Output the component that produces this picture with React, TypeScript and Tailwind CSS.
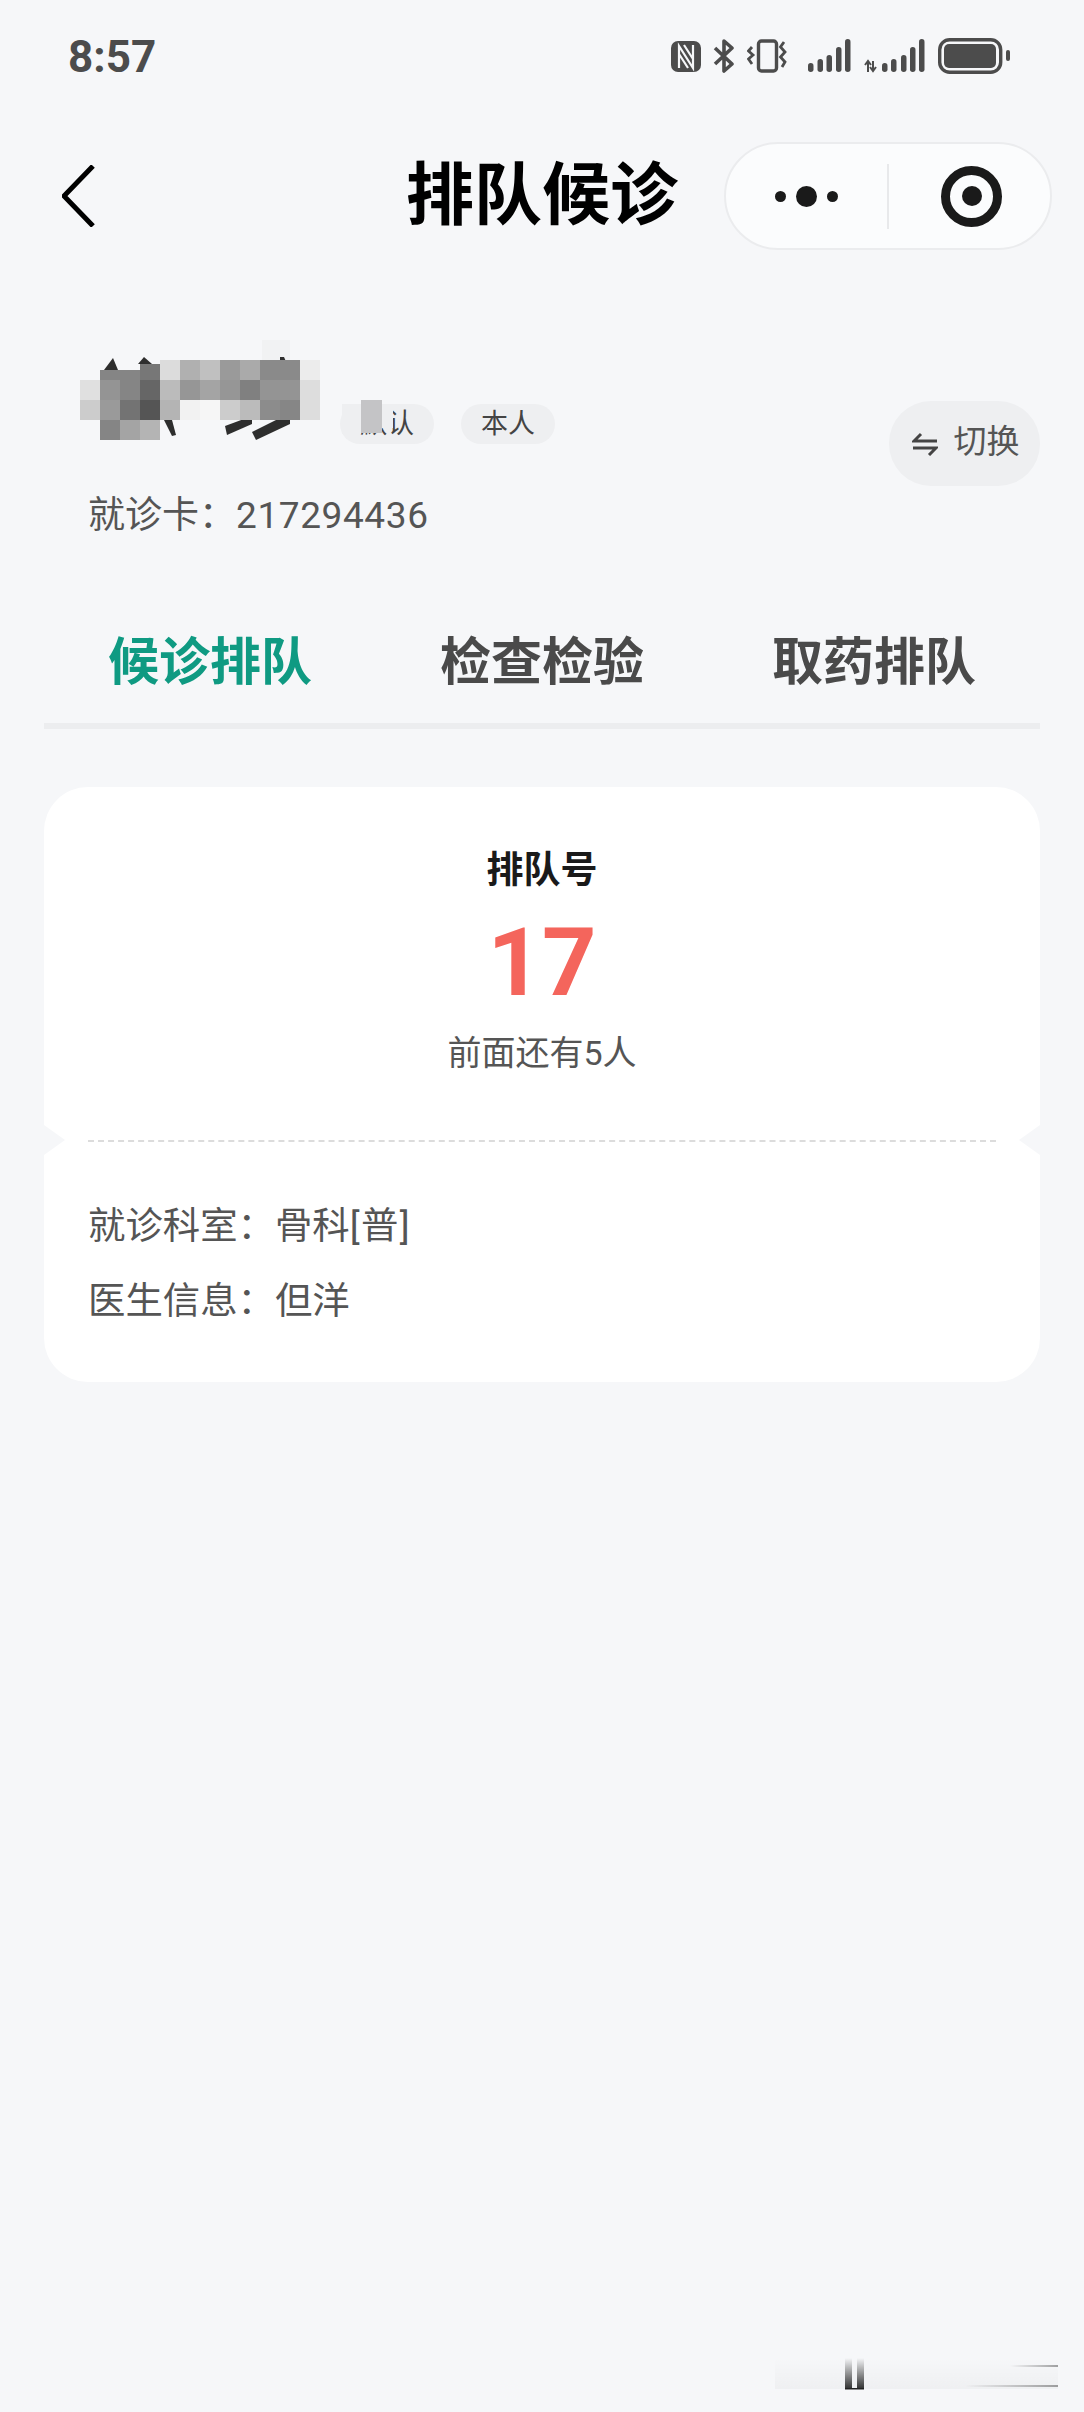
import React from 'react';

const mosaic: string[][] = [
  ['', '', '', '', '#dcdcdc', '#b0b0b0', '#c0c0c0', '#9a9a9a', '#aaaaaa', '#8a8a8a', '#8a8a8a', '#ececec'],
  ['#e0e0e0', '#949494', '#858585', '#666666', '#bbbbbb', '#969696', '#a4a4a4', '#969696', '#808080', '#949494', '#949494', '#dddddd'],
  ['#cccccc', '#9a9a9a', '#737373', '#555555', '#b4b4b4', '#f2f2f2', '#f6f6f6', '#cccccc', '#bbbbbb', '#8c8c8c', '#868686', '#dddddd'],
  ['', '#858585', '#a4a4a4', '#b4b4b4', '', '', '', '', '', '', '', ''],
];

const barHeights = [9, 13, 17, 25, 33];

const NameMosaic = () => (
  <svg className="absolute left-[-8px] top-[-64px] z-10" width="320" height="110" viewBox="0 0 320 110">
    <rect x="182" y="0" width="28" height="20" fill="#f1f2f3" />
    <g fill="#2e2e2e">
      <polygon points="24,30 33,18 38,30" />
      <polygon points="58,24 64,17 72,24" />
      <polygon points="200,17 204,17 207,24 200,24" />
      <polygon points="145,86 172,76 172,84 147,95" />
      <polygon points="172,92 200,78 210,78 210,84 176,100" />
      <polygon points="50,100 69,90 66,100" />
      <polygon points="84,80 92,80 96,95 92,96" />
    </g>
    {/* top of the first columns starts a little lower than the rest */}
    <rect x="20" y="30" width="40" height="10" fill="#858585" />
    <rect x="60" y="24" width="20" height="16" fill="#777777" />
    {mosaic.map((row, r) =>
      row.map((c, i) => (c ? <rect key={`${r}-${i}`} x={i * 20} y={20 + r * 20} width="20" height="20" fill={c} /> : null))
    )}
    <rect x="281" y="60" width="21" height="33" fill="#c4c4c6" />
    <rect x="262" y="64" width="19" height="30" fill="#eeeff1" />
    <rect x="302" y="64" width="11" height="24" fill="#eeeff1" />
  </svg>
);

const StatusIcons = () => (
  <div className="flex items-center">
    <svg width="30" height="31" viewBox="0 0 30 31">
      <rect width="30" height="31" rx="7" fill="#4c4c4c" />
      <path d="M8 27V5L22 27V4M13 4L22 18M8 13L17 27" fill="none" stroke="#f6f7f9" strokeWidth="2.2" />
    </svg>
    <svg className="ml-[12px]" width="22" height="34" viewBox="0 0 22 34">
      <path d="M2 9L19 25L11 32V2L19 9L2 25" fill="none" stroke="#4c4c4c" strokeWidth="3.6" strokeLinejoin="round" />
    </svg>
    <svg className="ml-[12px]" width="42" height="34" viewBox="0 0 42 34">
      <rect x="11.5" y="2" width="18" height="30" rx="3" fill="none" stroke="#4c4c4c" strokeWidth="3.4" />
      <path d="M5 8L1.5 12L6 16L1.5 20L5 25M37 3L33.5 8L38 13L33.5 18L38 23L35 28" fill="none" stroke="#4c4c4c" strokeWidth="2.8" />
    </svg>
    <svg className="ml-[19px]" width="43" height="34" viewBox="0 0 43 34">
      {barHeights.map((h, i) => (
        <rect key={i} x={[0, 9.5, 18.5, 28, 37][i]} y={33 - h} width="5.5" height={h} rx="2.7" fill="#4c4c4c" />
      ))}
    </svg>
    <svg className="ml-[13px]" width="61" height="34" viewBox="0 0 61 34">
      <path d="M4 33V23M1 26L4 22L7 26M9 22V32M6 28L9 32L12 28" fill="none" stroke="#4c4c4c" strokeWidth="2" />
      {barHeights.map((h, i) => (
        <rect key={i} x={[18, 27, 37, 46, 55][i]} y={33 - h} width="5.5" height={h} rx="2.7" fill="#4c4c4c" />
      ))}
    </svg>
    <svg className="ml-[13px]" width="72" height="36" viewBox="0 0 72 36">
      <rect x="1.7" y="1.7" width="61" height="32.6" rx="10" fill="none" stroke="#4c4c4c" strokeWidth="3.4" />
      <rect x="6" y="6" width="52" height="24" rx="5" fill="#4c4c4c" />
      <rect x="68" y="12" width="4" height="11" rx="2" fill="#4c4c4c" />
    </svg>
  </div>
);

const tabs = ['候诊排队', '检查检验', '取药排队'];

export default function App() {
  return (
    <div className="relative h-[2412px] w-[1084px] overflow-hidden bg-[#f6f7f9] font-['Roboto','Noto_Sans_CJK_SC',sans-serif]">
      {/* Status bar */}
      <div className="flex h-[112px] items-center justify-between pl-[68px] pr-[74px]">
        <span className="pt-[2px] text-[44px] font-bold leading-none text-[#4c4c4c]">8:57</span>
        <StatusIcons />
      </div>

      {/* Nav bar */}
      <div className="mt-[30px] grid h-[107px] grid-cols-[1fr_auto_1fr] items-center px-[32px]">
        <svg className="ml-[30px]" width="33" height="62" viewBox="0 0 33 62">
          <path d="M31 1L2 31L31 61" fill="none" stroke="#000" strokeWidth="5" />
        </svg>
        <h1 className="text-[68px] font-bold leading-none text-black">排队候诊</h1>
        <div className="flex h-[108px] w-[328px] items-center justify-self-end rounded-full border-2 border-[#ebecee] bg-[#fbfcfd]">
          <div className="flex w-[161px] items-center justify-center gap-[10px]">
            <span className="h-[11px] w-[11px] rounded-full bg-[#1a1a1a]" />
            <span className="h-[21px] w-[21px] rounded-full bg-[#1a1a1a]" />
            <span className="h-[11px] w-[11px] rounded-full bg-[#1a1a1a]" />
          </div>
          <div className="h-[65px] w-[2px] bg-[#e8e9eb]" />
          <div className="flex flex-1 items-center justify-center pl-[4px]">
            <div className="flex h-[61px] w-[61px] items-center justify-center rounded-full border-[9px] border-[#1a1a1a]">
              <span className="h-[20px] w-[20px] rounded-full bg-[#1a1a1a]" />
            </div>
          </div>
        </div>
      </div>

      {/* Patient */}
      <div className="flex justify-between pl-[88px] pr-[44px]">
        <div className="pt-[155px]">
          <div className="flex items-center">
            <div className="relative h-[40px] w-[252px]">
              <NameMosaic />
            </div>
            <span className="flex h-[40px] w-[94px] items-center justify-center rounded-[20px] bg-[#eeeff1] text-[27px] text-[#444]">默认</span>
            <span className="ml-[27px] flex h-[40px] w-[94px] items-center justify-center rounded-[20px] bg-[#eeeff1] text-[27px] text-[#444]">本人</span>
          </div>
          <p className="mt-[47px] text-[37px] leading-[50px] text-[#555]">
            就诊卡：<span className="tracking-[0.6px]">217294436</span>
          </p>
        </div>
        <div className="mt-[152px] flex h-[85px] w-[151px] items-center justify-center gap-[16px] rounded-[42px] bg-[#eeeff1] pl-[2px]">
          <svg width="26" height="24" viewBox="0 0 26 24">
            <path d="M25 9H2L9 2M1 16H24L17 23" fill="none" stroke="#444" strokeWidth="3" />
          </svg>
          <span className="pb-[4px] text-[33px] leading-none text-[#555]">切换</span>
        </div>
      </div>

      {/* Tabs */}
      <div className="mx-[44px] mt-[60px] grid h-[128px] grid-cols-3 items-center border-b-[6px] border-[#ecedef]">
        {tabs.map((t, i) => (
          <span
            key={t}
            className={`text-center text-[51px] font-bold leading-none ${i === 0 ? 'text-[#0f9a82]' : 'text-[#4a4a4a]'}`}
          >
            {t}
          </span>
        ))}
      </div>

      {/* Queue card */}
      <div className="relative mx-[44px] mt-[58px] overflow-hidden rounded-[44px] bg-white">
        <div className="flex h-[353px] flex-col items-center pt-[64px]">
          <p className="text-[37px] font-bold leading-[40px] text-[#1a1a1a]">排队号</p>
          <p className="mt-[23px] text-[95px] font-bold leading-[98px] text-[#f4655c]">17</p>
          <p className="mt-[21px] text-[34px] leading-[40px] text-[#555]">前面还有5人</p>
        </div>
        <div className="mx-[44px] border-t-2 border-dashed border-[#dcdcdc]" />
        <div className="flex flex-col gap-[25px] pb-[56px] pl-[44px] pt-[59px] text-[37.4px] leading-[50px] text-[#555]">
          <p>就诊科室：骨科<span className="tracking-[1.4px]">[普]</span></p>
          <p>医生信息：但洋</p>
        </div>
        {/* ticket notches */}
        <div className="absolute left-0 top-[338px] h-[30px] w-[21px] bg-[#f6f7f9] [clip-path:polygon(0_0,100%_50%,0_100%)]" />
        <div className="absolute right-0 top-[338px] h-[30px] w-[21px] bg-[#f6f7f9] [clip-path:polygon(100%_0,0_50%,100%_100%)]" />
      </div>

      {/* Watermark */}
      <svg className="absolute left-[775px] top-[2350px]" width="290" height="44" viewBox="0 0 290 44">
        <defs>
          <linearGradient id="wmBar" x1="0" y1="0" x2="0" y2="1">
            <stop offset="0" stopColor="#000" stopOpacity="0" />
            <stop offset="1" stopColor="#000" stopOpacity="0.8" />
          </linearGradient>
          <linearGradient id="wmLine" x1="0" y1="0" x2="1" y2="0">
            <stop offset="0" stopColor="#000" stopOpacity="0" />
            <stop offset="1" stopColor="#000" stopOpacity="0.35" />
          </linearGradient>
          <linearGradient id="wmBand" x1="0" y1="0" x2="0" y2="1">
            <stop offset="0" stopColor="#000" stopOpacity="0" />
            <stop offset="1" stopColor="#000" stopOpacity="0.03" />
          </linearGradient>
        </defs>
        <rect x="0" y="8" width="283" height="31" fill="url(#wmBand)" />
        <rect x="70" y="8" width="7" height="31" fill="url(#wmBar)" />
        <rect x="82" y="8" width="7" height="31" fill="url(#wmBar)" />
        <rect x="70" y="38" width="19" height="1.5" fill="#222" />
        <rect x="235" y="15" width="48" height="2" fill="url(#wmLine)" />
        <rect x="190" y="35" width="93" height="2" fill="url(#wmLine)" />
      </svg>
    </div>
  );
}
